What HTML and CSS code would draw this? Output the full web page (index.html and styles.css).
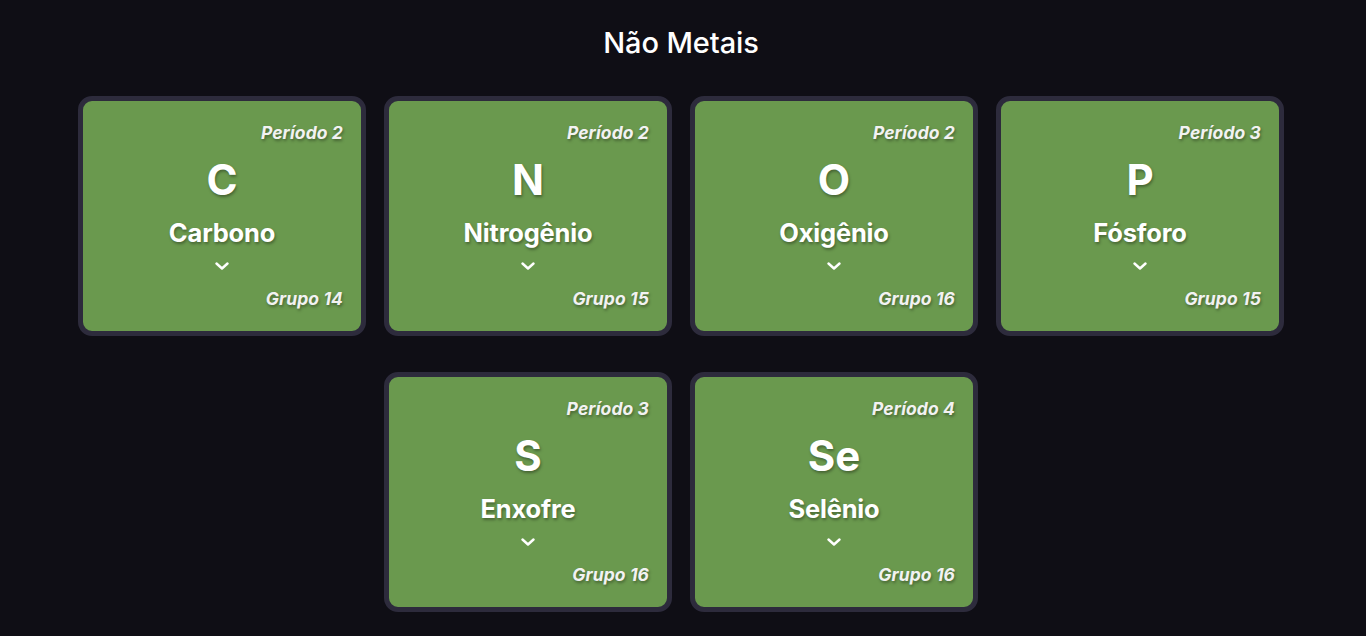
FILE: index.html
```html
<!DOCTYPE html>
<html lang="pt">
<head>
<meta charset="utf-8">
<title>Não Metais</title>
<link rel="stylesheet" href="styles.css">
</head>
<body>
<main class="page">
  <h1 class="title">Não Metais</h1>
  <section class="grid">
    <div class="card"><div class="period">Período 2</div><div class="symbol">C</div><div class="name">Carbono</div><svg class="chev" viewBox="0 0 14 8" width="14" height="8"><path d="M1.5 1.5 L7 6.5 L12.5 1.5" /></svg><div class="group">Grupo 14</div></div>
    <div class="card"><div class="period">Período 2</div><div class="symbol">N</div><div class="name">Nitrogênio</div><svg class="chev" viewBox="0 0 14 8" width="14" height="8"><path d="M1.5 1.5 L7 6.5 L12.5 1.5" /></svg><div class="group">Grupo 15</div></div>
    <div class="card"><div class="period">Período 2</div><div class="symbol">O</div><div class="name">Oxigênio</div><svg class="chev" viewBox="0 0 14 8" width="14" height="8"><path d="M1.5 1.5 L7 6.5 L12.5 1.5" /></svg><div class="group">Grupo 16</div></div>
    <div class="card"><div class="period">Período 3</div><div class="symbol">P</div><div class="name">Fósforo</div><svg class="chev" viewBox="0 0 14 8" width="14" height="8"><path d="M1.5 1.5 L7 6.5 L12.5 1.5" /></svg><div class="group">Grupo 15</div></div>
    <div class="card"><div class="period">Período 3</div><div class="symbol">S</div><div class="name">Enxofre</div><svg class="chev" viewBox="0 0 14 8" width="14" height="8"><path d="M1.5 1.5 L7 6.5 L12.5 1.5" /></svg><div class="group">Grupo 16</div></div>
    <div class="card"><div class="period">Período 4</div><div class="symbol">Se</div><div class="name">Selênio</div><svg class="chev" viewBox="0 0 14 8" width="14" height="8"><path d="M1.5 1.5 L7 6.5 L12.5 1.5" /></svg><div class="group">Grupo 16</div></div>
  </section>
</main>
</body>
</html>
```
FILE: styles.css
```css
* { box-sizing: border-box; }
html, body {
  margin: 0;
  padding: 0;
  background: #0f0e15;
  color: #ffffff;
  font-family: Inter, "Noto Sans", "Liberation Sans", sans-serif;
}
.page {
  display: flex;
  flex-direction: column;
  align-items: center;
  padding-top: 26px;
  padding-right: 4px;
}
.title {
  margin: 0 0 36px 0;
  font-size: 29px;
  line-height: 34px;
  font-weight: 500;
  letter-spacing: -0.1px;
}
.grid {
  width: 1206px;
  display: flex;
  flex-wrap: wrap;
  justify-content: center;
  column-gap: 18px;
  row-gap: 36px;
}
.card {
  width: 288px;
  height: 240px;
  background: #6a994e;
  border: 5px solid #2d2b3c;
  border-radius: 14px;
  padding: 20px 18px 0 18px;
  display: flex;
  flex-direction: column;
  align-items: center;
  text-shadow: 1px 2px 3px rgba(0, 0, 0, 0.35);
}
.period, .group {
  align-self: flex-end;
  font-size: 17.5px;
  line-height: 24px;
  font-weight: 700;
  font-style: italic;
  letter-spacing: 0.1px;
  color: #f2f2f2;
}
.symbol {
  margin-top: 11px;
  font-size: 42px;
  line-height: 48px;
  font-weight: 700;
}
.name {
  margin-top: 14px;
  font-size: 25.5px;
  line-height: 30px;
  font-weight: 700;
  letter-spacing: -0.2px;
}
.chev {
  margin-top: 14px;
  fill: none;
  stroke: #ffffff;
  stroke-width: 2.4;
  stroke-linecap: round;
  stroke-linejoin: round;
}
.group {
  margin-top: 17px;
}
```
